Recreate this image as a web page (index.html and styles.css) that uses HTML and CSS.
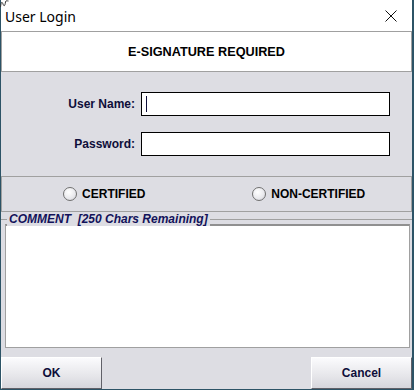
FILE: index.html
```html
<!DOCTYPE html>
<html>
<head>
    <title>User Login</title>
    <link rel="stylesheet" href="styles.css">
</head>
<body>
    <div class="window">
        <!-- Title bar -->
        <div class="titlebar">
            <svg class="grip" width="9" height="8" viewBox="0 0 9 8"><path d="M0.5 7 C1 2 2 1 3 4 C4 7 5 6 5.5 2 C6 0 7 1 8.5 1" fill="none" stroke="#333" stroke-width="1"/></svg>
            <span class="title">User Login</span>
            <svg class="close" width="12" height="12" viewBox="0 0 12 12"><path d="M0.5 0.5 L11.5 11.5 M11.5 0.5 L0.5 11.5" stroke="#111" stroke-width="1"/></svg>
        </div>

        <div class="header">E-SIGNATURE REQUIRED</div>

        <!-- Credentials -->
        <div class="form">
            <div class="form-row">
                <label for="user-name">User Name:</label>
                <div class="field focused"><span class="caret"></span></div>
            </div>
            <div class="form-row">
                <label for="password">Password:</label>
                <div class="field"></div>
            </div>
        </div>

        <div class="radios">
            <div class="radio-item"><span class="radio"></span>CERTIFIED</div>
            <div class="radio-item"><span class="radio"></span>NON-CERTIFIED</div>
        </div>

        <!-- Comment -->
        <div class="comment">
            <div class="legend">COMMENT &nbsp;[250 Chars Remaining]</div>
            <div class="comment-box"></div>
        </div>

        <div class="buttons">
            <div class="btn">OK</div>
            <div class="btn">Cancel</div>
        </div>
    </div>
</body>
</html>
```

FILE: styles.css
```css
body {
    margin: 0;
    width: 414px;
    height: 390px;
    overflow: hidden;
    background-color: #2c5366;
    font-family: "Liberation Sans", Arial, sans-serif;
}
.window {
    margin-left: 1px;
    width: 411px;
    height: 389px;
    background-color: #dddde3;
    display: flex;
    flex-direction: column;
}
/* Title bar */
.titlebar {
    position: relative;
    height: 31px;
    background-color: #fff;
    display: flex;
    align-items: center;
    padding-left: 4px;
}
.grip {
    position: absolute;
    left: -1px;
    top: 0;
}
.title {
    font-family: "Noto Sans", "Liberation Sans", sans-serif;
    font-size: 14px;
    color: #000;
    margin-top: 1px;
}
.close {
    margin-left: auto;
    margin-right: 15px;
}
.header {
    height: 39px;
    border: 1px solid #a0a0a0;
    background-color: #fff;
    display: flex;
    align-items: center;
    justify-content: center;
    font-weight: bold;
    font-size: 12.7px;
    color: #000;
}
/* Credentials */
.form {
    padding: 20px 0 20px 0;
    display: flex;
    flex-direction: column;
    gap: 16px;
}
.form-row {
    display: flex;
    align-items: center;
}
.form-row label {
    width: 134px;
    text-align: right;
    font-weight: bold;
    font-size: 12px;
    color: #0e0e3a;
    margin-right: 6px;
}
.field {
    width: 247px;
    height: 22px;
    border: 1px solid #000;
    background-color: #fff;
    display: flex;
    align-items: center;
}
.caret {
    width: 1px;
    height: 16px;
    margin-left: 4px;
    background-color: #0e0e3a;
}
.radios {
    height: 34px;
    border: 1px solid #a0a0a0;
    display: grid;
    grid-template-columns: 1fr 1fr;
    align-items: center;
}
.radio-item {
    display: flex;
    align-items: center;
    justify-content: center;
    font-weight: bold;
    font-size: 12px;
    color: #000;
    gap: 5px;
}
.radio {
    width: 12px;
    height: 12px;
    border: 1px solid #707070;
    border-radius: 50%;
    background: radial-gradient(circle at 40% 35%, #fff 0%, #e8e8ec 60%, #c8c8d0 100%);
}
/* Comment */
.comment {
    position: relative;
    margin-top: 7px;
    border-top: 1px solid #a0a0a0;
    padding: 4px 2px 0 4px;
}
.legend {
    position: absolute;
    top: -8px;
    left: 6px;
    padding: 0 2px;
    background-color: #dddde3;
    font-weight: bold;
    font-style: italic;
    font-size: 12px;
    color: #12125a;
}
.comment-box {
    height: 121px;
    border: 1px solid #a0a0a0;
    border-top: 2px solid #909090;
    background-color: #fff;
}
.buttons {
    margin-top: auto;
    display: flex;
    justify-content: space-between;
}
.btn {
    width: 99px;
    height: 30px;
    background: linear-gradient(#fbfbfd, #e6e6ea 60%, #d6d6dc);
    border-top: 1px solid #fff;
    border-left: 1px solid #fff;
    border-right: 1px solid #606068;
    border-bottom: 1px solid #606068;
    display: flex;
    align-items: center;
    justify-content: center;
    font-weight: bold;
    font-size: 12px;
    color: #0e0e3a;
}
```
